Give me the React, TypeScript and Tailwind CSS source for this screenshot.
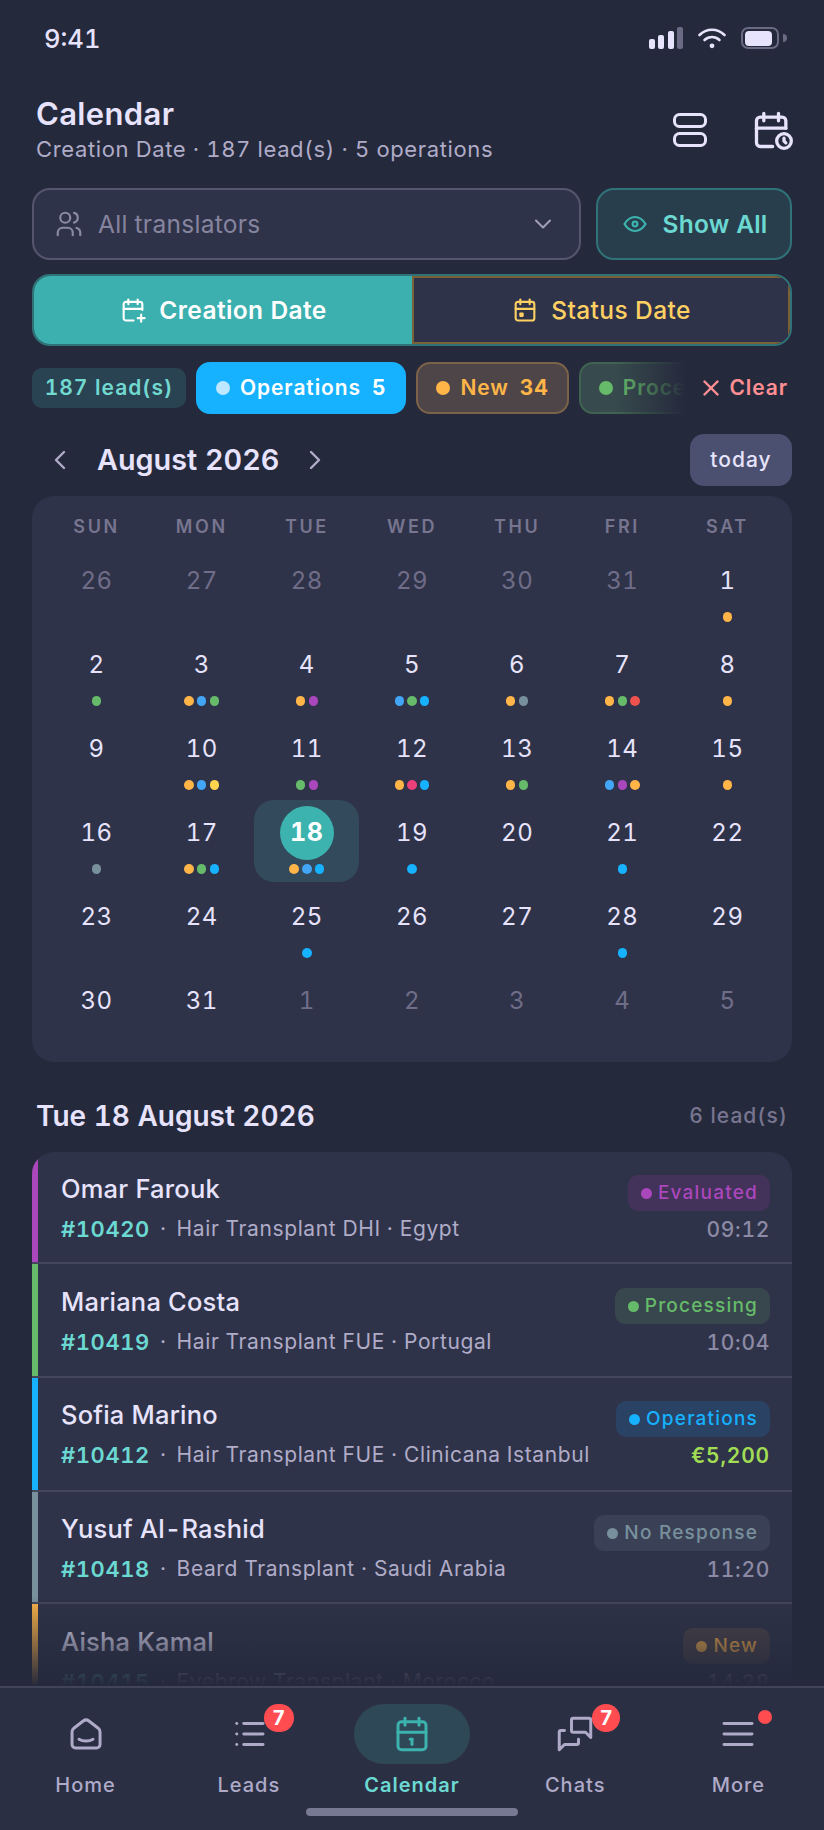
import type { ReactNode } from "react";
import {
  TbCalendar,
  TbCalendarEvent,
  TbCalendarPlus,
  TbCalendarTime,
  TbChevronDown,
  TbChevronLeft,
  TbChevronRight,
  TbEye,
  TbList,
  TbMenu2,
  TbMessages,
  TbSmartHome,
  TbUsers,
  TbX,
} from "react-icons/tb";

const COLORS: Record<string, string> = {
  o: "#ffb547",
  b: "#42a5f5",
  s: "#16b1ff",
  g: "#66bb6a",
  p: "#ab47bc",
  r: "#ef5350",
  k: "#ec407a",
  y: "#ffd54f",
  n: "#78909c",
};

type Day = { n: number; muted?: boolean; dots?: string; selected?: boolean };

const days: Day[] = [
  { n: 26, muted: true }, { n: 27, muted: true }, { n: 28, muted: true }, { n: 29, muted: true }, { n: 30, muted: true }, { n: 31, muted: true }, { n: 1, dots: "o" },
  { n: 2, dots: "g" }, { n: 3, dots: "obg" }, { n: 4, dots: "op" }, { n: 5, dots: "bgs" }, { n: 6, dots: "on" }, { n: 7, dots: "ogr" }, { n: 8, dots: "o" },
  { n: 9 }, { n: 10, dots: "oby" }, { n: 11, dots: "gp" }, { n: 12, dots: "oks" }, { n: 13, dots: "og" }, { n: 14, dots: "bpo" }, { n: 15, dots: "o" },
  { n: 16, dots: "n" }, { n: 17, dots: "ogs" }, { n: 18, dots: "obs", selected: true }, { n: 19, dots: "s" }, { n: 20 }, { n: 21, dots: "s" }, { n: 22 },
  { n: 23 }, { n: 24 }, { n: 25, dots: "s" }, { n: 26 }, { n: 27 }, { n: 28, dots: "s" }, { n: 29 },
  { n: 30 }, { n: 31 }, { n: 1, muted: true }, { n: 2, muted: true }, { n: 3, muted: true }, { n: 4, muted: true }, { n: 5, muted: true },
];

const leads = [
  { name: "Omar Farouk", id: "#10420", info: "Hair Transplant DHI · Egypt", status: "Evaluated", color: "#ab47bc", bg: "bg-[#43325a]", right: "09:12", h: "h-[112px]", pt: "pt-[23px]" },
  { name: "Mariana Costa", id: "#10419", info: "Hair Transplant FUE · Portugal", status: "Processing", color: "#66bb6a", bg: "bg-[#38474d]", right: "10:04", h: "h-[114px]", pt: "pt-[24px]" },
  { name: "Sofia Marino", id: "#10412", info: "Hair Transplant FUE · Clinicana Istanbul", status: "Operations", color: "#16b1ff", bg: "bg-[#2a4263]", right: "€5,200", money: true, h: "h-[114px]", pt: "pt-[23px]" },
  { name: "Yusuf Al-Rashid", id: "#10418", info: "Beard Transplant · Saudi Arabia", status: "No Response", color: "#78909c", bg: "bg-[#3a4156]", right: "11:20", h: "h-[112px]", pt: "pt-[23px]" },
  { name: "Aisha Kamal", id: "#10415", info: "Eyebrow Transplant · Morocco", status: "New", color: "#ffb547", bg: "bg-[#4b4348]", right: "14:28", h: "h-[114px]", pt: "pt-[24px]" },
];

const tabs = [
  { label: "Home", icon: <TbSmartHome size={42} strokeWidth={1.7} className="text-[#aeaac8]" /> },
  { label: "Leads", icon: <TbList size={42} strokeWidth={1.7} className="text-[#aeaac8]" />, badge: "left-[73px] w-[30px]" },
  { label: "Calendar", icon: <TbCalendar size={42} strokeWidth={1.7} className="text-[#3cb3ae]" />, active: true },
  { label: "Chats", icon: <TbMessages size={42} strokeWidth={1.7} className="text-[#aeaac8]" />, badge: "left-[75px] w-[28px]" },
  { label: "More", icon: <TbMenu2 size={42} strokeWidth={1.7} className="text-[#aeaac8]" />, dot: true },
];

const SplitIcon = () => (
  <svg width="34" height="34" viewBox="0 0 34 34" fill="none" stroke="#e7e3fc" strokeWidth="3">
    <rect x="1.500" y="1.500" width="31" height="12" rx="5" />
    <rect x="1.500" y="20.500" width="31" height="12" rx="5" />
  </svg>
);

function StatusBar() {
  return (
    <div className="flex h-[76px] items-center justify-between pl-[44px] pr-[37px]">
      <span className="pt-[2px] text-[25.500px] font-medium text-[#e7e3fc]">9:41</span>
      <div className="flex items-center gap-[14px]">
        <div className="flex h-[22px] items-end gap-[3.500px]">
          <div className="h-[10px] w-[6px] rounded-[2px] bg-[#e7e3fc]" />
          <div className="h-[14px] w-[6px] rounded-[2px] bg-[#e7e3fc]" />
          <div className="h-[18px] w-[6px] rounded-[2px] bg-[#e7e3fc]" />
          <div className="h-[22px] w-[6px] rounded-[2px] bg-[#6a6a84]" />
        </div>
        <svg width="30" height="22" viewBox="0 0 30 22" fill="none" stroke="#e7e3fc" strokeWidth="2.600" strokeLinecap="round">
          <path d="M2.500 8c7-7 18-7 25 0M7.500 13c4.500-4 10.500-4 15 0" />
          <circle cx="15" cy="18.800" r="2.400" fill="#e7e3fc" stroke="none" />
        </svg>
        <div className="flex items-center gap-[4px]">
          <div className="flex h-[22px] w-[38px] items-center rounded-[7px] border-2 border-[#6a6a84] p-[1.500px]">
            <div className="h-full w-[27px] rounded-[4px] bg-[#e7e3fc]" />
          </div>
          <div className="h-[8px] w-[4px] rounded-r-sm bg-[#6a6a84]" />
        </div>
      </div>
    </div>
  );
}

function Chip({ children, className }: { children: ReactNode; className: string }) {
  return <div className={`flex h-[52px] shrink-0 items-center rounded-[14px] border-2 px-[18px] text-[21px] font-semibold tracking-[0.9px] ${className}`}>{children}</div>;
}

function Cell({ d }: { d: Day }) {
  return (
    <div className={`flex h-[82px] flex-col items-center ${d.selected ? "rounded-[20px] bg-[#324a5c]" : ""}`}>
      {d.selected ? (
        <div className="mt-[6px] flex h-[54px] w-[54px] items-center justify-center rounded-full bg-[#3cb3ae] text-[25px] font-bold tracking-[0.6px] text-white">{d.n}</div>
      ) : (
        <div className={`mt-[6px] flex h-[54px] items-center text-[24px] tracking-[0.5px] ${d.muted ? "text-[#6f6d88]" : "text-[#e7e3fc]"}`}>{d.n}</div>
      )}
      <div className="mt-[4px] flex h-[10px] gap-[3.500px]">
        {(d.dots ?? "").split("").map((c, i) => (
          <span key={i} className="h-[10px] w-[9.330px] rounded-full" style={{ backgroundColor: COLORS[c] }} />
        ))}
      </div>
    </div>
  );
}

export default function App() {
  return (
    <div className="relative flex h-[1830px] w-[824px] flex-col overflow-hidden bg-[#25293c] font-['Inter',sans-serif] tabular-nums">
      <StatusBar />

      <div className="min-h-0 flex-1 overflow-hidden">
        {/* Header */}
        <div className="flex items-start justify-between pl-[36px] pr-[29px] pt-[20px]">
          <div>
            <h1 className="text-[31px] font-semibold leading-[36px] tracking-[0.35px] text-[#e7e3fc]">Calendar</h1>
            <p className="mt-[3px] text-[22px] leading-[28px] tracking-[0.63px] text-[#b0acc8]">Creation Date · 187 lead(s) · 5 operations</p>
          </div>
          <div className="mt-[12px] flex items-center gap-[44px]">
            <SplitIcon />
            <TbCalendarTime size={44} strokeWidth={1.8} className="text-[#e7e3fc]" />
          </div>
        </div>

        {/* Filters */}
        <div className="mt-[25px] flex gap-[15px] px-[32px]">
          <div className="flex h-[72px] flex-1 items-center rounded-[18px] border-2 border-[#55566e] bg-[#2f3349] pl-[20px] pr-[22px]">
            <TbUsers size={30} strokeWidth={1.75} className="text-[#8b89a4]" />
            <span className="ml-[14px] flex-1 text-[24.500px] tracking-[0.3px] text-[#86849f]">All translators</span>
            <TbChevronDown size={28} strokeWidth={1.75} className="text-[#a09eb8]" />
          </div>
          <div className="flex h-[72px] w-[196px] items-center justify-center gap-[14px] rounded-[18px] border-2 border-[#2f7379] bg-[#293e4d]">
            <TbEye size={28} strokeWidth={1.9} className="text-[#3cb3ae]" />
            <span className="text-[24.500px] font-semibold tracking-[0.2px] text-[#6bd9d2]">Show All</span>
          </div>
        </div>

        {/* Date type toggle */}
        <div className="mx-[32px] mt-[14px] flex h-[72px] overflow-hidden rounded-[18px] border-2 border-[#2f7379]">
          <div className="flex w-[378px] items-center justify-center gap-[12px] bg-[#3cb0ae] text-white">
            <TbCalendarPlus size={28} strokeWidth={1.8} />
            <span className="text-[24.500px] font-semibold tracking-[0.4px]">Creation Date</span>
          </div>
          <div className="flex flex-1 items-center justify-center gap-[12px] border-2 border-[#7a6136] bg-[#2f3349] text-[#ffd062]">
            <TbCalendarEvent size={28} strokeWidth={1.8} />
            <span className="text-[24.500px] font-medium tracking-[0.4px]">Status Date</span>
          </div>
        </div>

        {/* Status chips */}
        <div className="relative mt-[16px] flex items-center gap-[10px] pl-[32px]">
          <div className="flex h-[40px] w-[154px] shrink-0 items-center justify-center rounded-[10px] bg-[#2a4353] text-[21px] font-semibold tracking-[1px] text-[#72d9d0]">187 lead(s)</div>
          <Chip className="gap-[10px] border-[#16b1ff] bg-[#16b1ff] text-white">
            <span className="h-[14px] w-[14px] rounded-full bg-[#bde8ff]" />
            Operations
            <span className="ml-[1px] font-bold">5</span>
          </Chip>
          <Chip className="gap-[10px] border-[#7c6248] bg-[#4e4549] text-[#ffb547]">
            <span className="h-[14px] w-[14px] rounded-full bg-[#ffb547]" />
            New
            <span className="ml-[1px] font-bold">34</span>
          </Chip>
          <Chip className="gap-[10px] border-[#3f6350] bg-[#374a4d] text-[#66bb6a]">
            <span className="h-[14px] w-[14px] rounded-full bg-[#66bb6a]" />
            Processing
          </Chip>
          <div className="absolute inset-y-0 right-0 flex items-center bg-[#25293c] pl-[12px] pr-[36px] before:absolute before:right-full before:h-full before:w-[70px] before:bg-gradient-to-r before:from-transparent before:to-[#25293c] before:content-['']">
            <TbX size={26} strokeWidth={2.25} className="text-[#ff8f93]" />
            <span className="ml-[6px] text-[21px] font-semibold tracking-[0.9px] text-[#ff8f93]">Clear</span>
          </div>
        </div>

        {/* Month nav */}
        <div className="mt-[20px] flex h-[52px] items-center justify-between pl-[44px] pr-[32px]">
          <div className="flex items-center">
            <TbChevronLeft size={32} strokeWidth={1.8} className="text-[#b0acc8]" />
            <span className="ml-[21px] text-[28.800px] font-semibold text-[#e7e3fc]">August 2026</span>
            <TbChevronRight size={32} strokeWidth={1.8} className="ml-[20px] text-[#b0acc8]" />
          </div>
          <div className="flex h-[52px] w-[102px] items-center justify-center rounded-[14px] bg-[#4b5070] text-[21px] font-medium tracking-[1px] text-[#e7e3fc]">today</div>
        </div>

        {/* Calendar card */}
        <div className="mx-[32px] mt-[10px] h-[566px] rounded-[22px] bg-[#2f3349] px-[12px] pt-[18px]">
          <div className="grid grid-cols-7">
            {["SUN", "MON", "TUE", "WED", "THU", "FRI", "SAT"].map((d) => (
              <div key={d} className="text-center text-[18px] font-semibold leading-[26px] tracking-[2.600px] text-[#77758f]">{d}</div>
            ))}
          </div>
          <div className="mt-[8px] grid grid-cols-7 gap-y-[2px]">
            {days.map((d, i) => (
              <Cell key={i} d={d} />
            ))}
          </div>
        </div>

        {/* Day header */}
        <div className="mt-[33px] flex items-center justify-between pl-[36px] pr-[36px]">
          <span className="text-[28px] font-semibold leading-[42px] text-[#e7e3fc]">Tue 18 August 2026</span>
          <span className="text-[21px] font-medium tracking-[1px] text-[#77758f]">6 lead(s)</span>
        </div>

        {/* Lead list */}
        <div className="mx-[32px] mt-[15px] overflow-hidden rounded-[22px] bg-[#2f3349]">
          {leads.map((l) => (
            <div key={l.id} className={`flex border-b-[2px] border-[#44465e] ${l.h}`}>
              <div className="w-[6px] shrink-0" style={{ backgroundColor: l.color }} />
              <div className={`flex flex-1 items-start justify-between pl-[23px] pr-[22px] ${l.pt}`}>
                <div>
                  <div className="mt-[-3px] text-[25.500px] font-medium leading-[34px] tracking-[0.2px] text-[#e7e3fc]">{l.name}</div>
                  <div className="mt-[9px] flex items-center text-[21px] leading-[28px] tracking-[0.6px] text-[#b0acc8]">
                    <span className="text-[22px] font-semibold tracking-[0.6px] text-[#6bd9d2]">{l.id}</span>
                    <span className="mx-[10px]">·</span>
                    <span>{l.info}</span>
                  </div>
                </div>
                <div className="flex flex-col items-end">
                  <div className={`flex h-[36px] items-center gap-[6px] rounded-[10px] pl-[13px] pr-[12px] text-[19px] font-medium tracking-[1.200px] ${l.bg}`} style={{ color: l.color }}>
                    <span className="h-[11px] w-[11px] rounded-full" style={{ backgroundColor: l.color }} />
                    {l.status}
                  </div>
                  <div className={`mt-[5px] text-[21px] leading-[28px] ${l.money ? "font-semibold tracking-[0.8px] text-[#a1dd54]" : "font-medium tracking-[0.7px] text-[#8b89a4]"}`}>{l.right}</div>
                </div>
              </div>
            </div>
          ))}
        </div>
      </div>

      {/* Fade above the nav */}
      <div className="pointer-events-none absolute bottom-[144px] left-0 right-0 h-[90px] bg-gradient-to-b from-transparent to-[#25293c]" />

      {/* Bottom nav */}
      <nav className="relative h-[144px] shrink-0 border-t-2 border-[#42445a] bg-[#2b2f44]">
        <div className="grid grid-cols-5 px-[4px]">
          {tabs.map((t) => (
            <div key={t.label} className="flex flex-col items-center pt-[16px]">
              <div className={`relative flex h-[60px] w-[116px] items-center justify-center rounded-full ${t.active ? "bg-[#2f4858]" : ""}`}>
                {t.icon}
                {t.badge && (
                  <span className={`absolute top-0 flex h-[28px] items-center justify-center rounded-full bg-[#ff4c51] text-[20px] font-bold text-white ${t.badge}`}>7</span>
                )}
                {t.dot && <span className="absolute left-[78px] top-[6px] h-[14px] w-[14px] rounded-full bg-[#ff4c51]" />}
              </div>
              <span className={`mt-[8px] text-[20px] leading-[26px] tracking-[1px] ${t.active ? "font-semibold text-[#6bd9d2]" : "font-medium text-[#aeaac8]"}`}>{t.label}</span>
            </div>
          ))}
        </div>
        <div className="absolute bottom-[14px] left-1/2 h-[8px] w-[212px] -translate-x-1/2 rounded-full bg-[#777891]" />
      </nav>
    </div>
  );
}
